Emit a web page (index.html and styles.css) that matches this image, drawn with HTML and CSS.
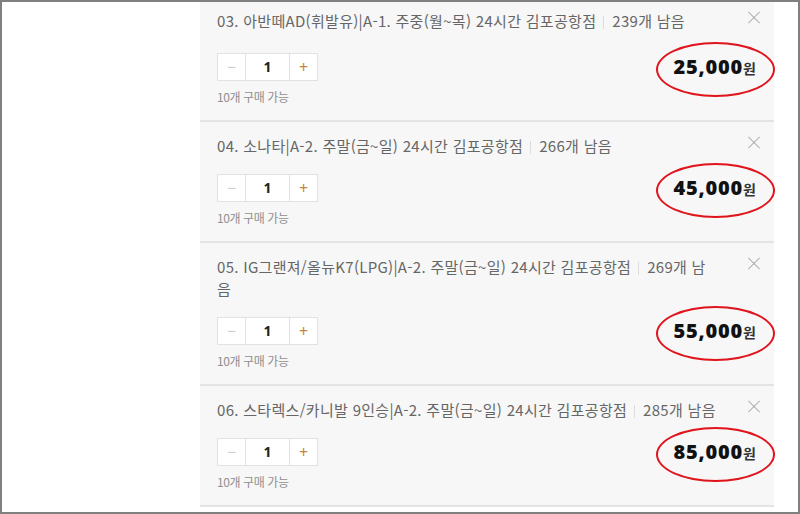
FILE: index.html
```html
<!DOCTYPE html>
<html lang="ko">
<head>
    <meta charset="UTF-8">
    <meta name="viewport" content="width=device-width, initial-scale=1.0">
    <title>선택 옵션</title>
    <link rel="stylesheet" href="styles.css">
</head>
<body>
<div class="frame">
    <div class="option-list">

        <div class="option-item first">
            <div class="option-head">
                <p class="option-name">03. 아반떼AD(휘발유)|A-1. 주중(월~목) 24시간 김포공항점<i class="divider"></i>239개 남음</p>
                <button class="remove-btn" aria-label="삭제"></button>
            </div>
            <div class="option-body">
                <div class="qty-box">
                    <div class="stepper">
                        <button class="step minus">&minus;</button>
                        <span class="count">1</span>
                        <button class="step plus">+</button>
                    </div>
                    <p class="limit">10개 구매 가능</p>
                </div>
                <div class="price marked"><strong>25,000</strong>원</div>
            </div>
        </div>

        <div class="option-item">
            <div class="option-head">
                <p class="option-name">04. 소나타|A-2. 주말(금~일) 24시간 김포공항점<i class="divider"></i>266개 남음</p>
                <button class="remove-btn" aria-label="삭제"></button>
            </div>
            <div class="option-body">
                <div class="qty-box">
                    <div class="stepper">
                        <button class="step minus">&minus;</button>
                        <span class="count">1</span>
                        <button class="step plus">+</button>
                    </div>
                    <p class="limit">10개 구매 가능</p>
                </div>
                <div class="price marked"><strong>45,000</strong>원</div>
            </div>
        </div>

        <div class="option-item">
            <div class="option-head">
                <p class="option-name">05. IG그랜져/올뉴K7(LPG)|A-2. 주말(금~일) 24시간 김포공항점<i class="divider"></i>269개 남음</p>
                <button class="remove-btn" aria-label="삭제"></button>
            </div>
            <div class="option-body">
                <div class="qty-box">
                    <div class="stepper">
                        <button class="step minus">&minus;</button>
                        <span class="count">1</span>
                        <button class="step plus">+</button>
                    </div>
                    <p class="limit">10개 구매 가능</p>
                </div>
                <div class="price marked"><strong>55,000</strong>원</div>
            </div>
        </div>

        <div class="option-item">
            <div class="option-head">
                <p class="option-name">06. 스타렉스/카니발 9인승|A-2. 주말(금~일) 24시간 김포공항점<i class="divider"></i>285개 남음</p>
                <button class="remove-btn" aria-label="삭제"></button>
            </div>
            <div class="option-body">
                <div class="qty-box">
                    <div class="stepper">
                        <button class="step minus">&minus;</button>
                        <span class="count">1</span>
                        <button class="step plus">+</button>
                    </div>
                    <p class="limit">10개 구매 가능</p>
                </div>
                <div class="price marked"><strong>85,000</strong>원</div>
            </div>
        </div>

    </div>
</div>
</body>
</html>
```

FILE: styles.css
```css
* {
    box-sizing: border-box;
}
html, body {
    margin: 0;
    padding: 0;
    background: #fff;
}
body {
    font-family: "Noto Sans CJK KR", "Noto Sans", sans-serif;
    color: #555;
}
.frame {
    width: 800px;
    height: 514px;
    border: 2px solid #808080;
    overflow: hidden;
    padding-left: 198px;
}
.option-list {
    width: 574px;
    background: #f7f7f7;
    margin-top: -5px;
}
.option-item {
    padding: 13px 14px 14px 17px;
    border-bottom: 2px solid #e4e4e4;
}
.option-head {
    display: flex;
    align-items: flex-start;
    gap: 32px;
}
.option-name {
    flex: 1;
    margin: 0;
    font-size: 15px;
    line-height: 22px;
    color: #666;
    letter-spacing: 0.3px;
}
.divider {
    display: inline-block;
    width: 1px;
    height: 13px;
    background: #dcdcdc;
    margin: 0 8px 0 7px;
    vertical-align: -2px;
}
.remove-btn {
    position: relative;
    width: 12px;
    height: 12px;
    margin-top: 2px;
    padding: 0;
    border: none;
    background: none;
    cursor: pointer;
}
.remove-btn::before,
.remove-btn::after {
    content: "";
    position: absolute;
    left: -2px;
    top: 5px;
    width: 16px;
    height: 1px;
    background: #b0b0b0;
    transform: rotate(45deg);
}
.remove-btn::after {
    transform: rotate(-45deg);
}
.option-body {
    display: flex;
    justify-content: space-between;
    align-items: flex-start;
    margin-top: 17px;
}
.first .option-body {
    margin-top: 21px;
}
.stepper {
    display: flex;
    height: 28px;
    width: 101px;
    border: 1px solid #e2e2e2;
    background: #fff;
}
.step {
    width: 28px;
    border: none;
    background: #fff;
    padding: 0;
    font-family: "Noto Sans", sans-serif;
    font-size: 16px;
    line-height: 26px;
    cursor: pointer;
}
.minus {
    color: #d0d0d0;
    border-right: 1px solid #e2e2e2;
}
.plus {
    color: #c8843c;
    border-left: 1px solid #e2e2e2;
}
.count {
    flex: 1;
    text-align: center;
    font-family: "Noto Sans", sans-serif;
    font-size: 14px;
    font-weight: 700;
    line-height: 26px;
    color: #222;
}
.limit {
    margin: 7px 0 0;
    font-size: 12px;
    line-height: 18px;
    color: #909090;
    letter-spacing: -0.4px;
}
.price {
    position: relative;
    height: 28px;
    line-height: 28px;
    margin-right: 4px;
    font-size: 14px;
    font-weight: 700;
    color: #333;
}
.price strong {
    font-family: "Open Sans", "Noto Sans", sans-serif;
    font-size: 20px;
    color: #111;
    letter-spacing: 0.8px;
}
/* red annotation ring */
.price.marked::after {
    content: "";
    position: absolute;
    left: -18px;
    right: -19px;
    top: -11px;
    bottom: -16px;
    border: 2px solid #e0141c;
    border-radius: 50%;
}
```
